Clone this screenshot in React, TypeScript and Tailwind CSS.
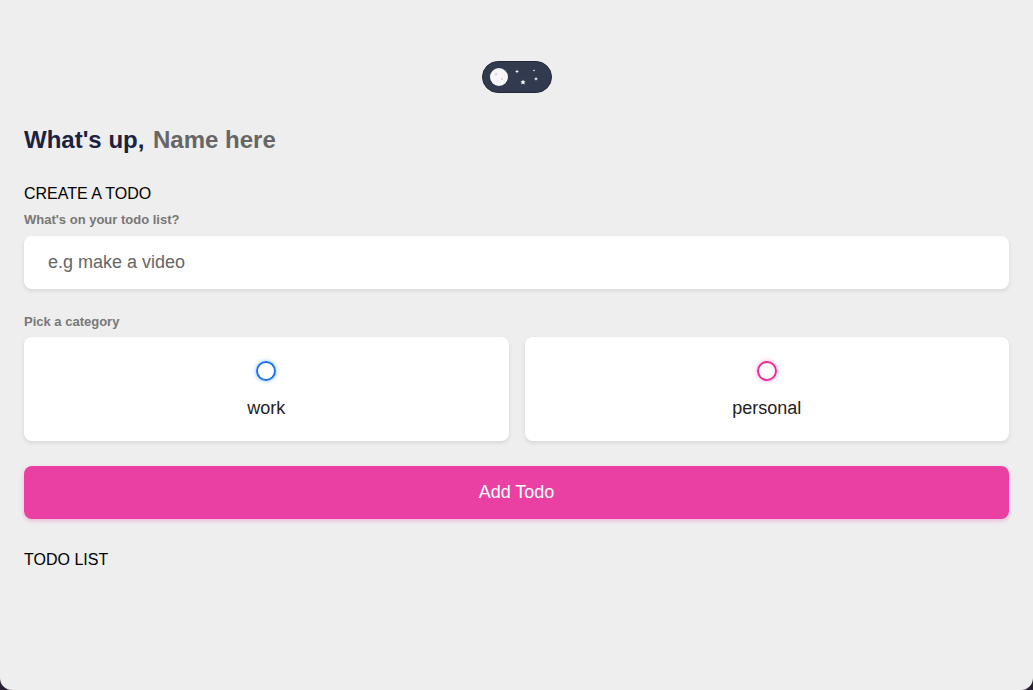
export default function App() {
  return (
    <div className="h-[690px] w-full bg-[#2a2233] font-['Liberation_Sans',Arial,sans-serif]">
      <main className="h-full bg-[#eeeeee] rounded-b-[12px] px-6 pt-[61px]">
        <div className="flex justify-center">
          <button className="flex items-center w-[70px] h-[32px] rounded-full bg-[#313a4f] border border-[#25293a] pl-[6px]">
            <svg width="58" height="24" viewBox="0 0 58 24">
              <circle cx="10" cy="12" r="9" fill="#f7f7f7" />
              <circle cx="7" cy="9" r="1.5" fill="#dddddd" />
              <circle cx="13" cy="14" r="1.2" fill="#dddddd" />
              <circle cx="9" cy="16" r="0.8" fill="#dddddd" />
              <path d="M28 4.5 l0.6 1.4 1.4 0.6 -1.4 0.6 -0.6 1.4 -0.6 -1.4 -1.4 -0.6 1.4 -0.6z" fill="#fff" />
              <circle cx="45" cy="5.5" r="0.8" fill="#fff" />
              <path d="M47 12 l0.6 1.3 1.3 0.6 -1.3 0.6 -0.6 1.3 -0.6 -1.3 -1.3 -0.6 1.3 -0.6z" fill="#fff" />
              <path d="M34 14.5 l0.8 1.7 1.8 0.2 -1.3 1.2 0.4 1.8 -1.7 -0.9 -1.7 0.9 0.4 -1.8 -1.3 -1.2 1.8 -0.2z" fill="#fff" />
            </svg>
          </button>
        </div>

        <h2 className="mt-[35px] text-[24px] font-bold text-[#1c2140] leading-none">
          What's up, <span className="ml-[2px] text-[#666666]">Name here</span>
        </h2>

        <section className="mt-[34px]">
          <h3 className="text-[16px] text-black leading-none">CREATE A TODO</h3>
          <h4 className="mt-[11px] text-[13px] font-bold text-[#777777] leading-none">What's on your todo list?</h4>
          <input
            type="text"
            placeholder="e.g make a video"
            className="mt-[10px] block w-full h-[53px] rounded-lg bg-white px-6 text-[18px] text-[#333] placeholder:text-[#666] shadow-[0_2px_4px_rgba(0,0,0,0.1)] outline-none"
          />

          <h4 className="mt-[26px] text-[13px] font-bold text-[#777777] leading-none">Pick a category</h4>
          <div className="mt-[9px] grid grid-cols-2 gap-4">
            <label className="flex flex-col items-center justify-center gap-[18px] h-[104px] rounded-lg bg-white shadow-[0_2px_4px_rgba(0,0,0,0.1)]">
              <span className="w-[20px] h-[20px] rounded-full border-2 border-[#1a73f0] shadow-[0_0_4px_rgba(26,115,240,0.5)]" />
              <span className="text-[18px] text-[#222] leading-none">work</span>
            </label>
            <label className="flex flex-col items-center justify-center gap-[18px] h-[104px] rounded-lg bg-white shadow-[0_2px_4px_rgba(0,0,0,0.1)]">
              <span className="w-[20px] h-[20px] rounded-full border-2 border-[#ea2d96] shadow-[0_0_4px_rgba(234,45,150,0.5)]" />
              <span className="text-[18px] text-[#222] leading-none">personal</span>
            </label>
          </div>

          <button className="mt-[25px] w-full h-[53px] rounded-lg bg-[#ea40a4] text-white text-[18px] shadow-[0_2px_4px_rgba(234,64,164,0.3)]">
            Add Todo
          </button>
        </section>

        <section className="mt-[33px]">
          <h3 className="text-[16px] text-black leading-none">TODO LIST</h3>
        </section>
      </main>
    </div>
  );
}
